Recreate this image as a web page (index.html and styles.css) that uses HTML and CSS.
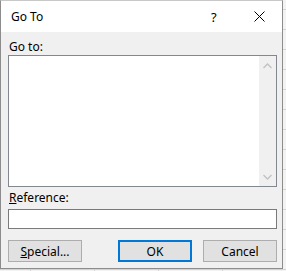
FILE: index.html
```html
<!DOCTYPE html>
<html>
	<head>
		<title>Go To</title>
		<meta charset="UTF-8">
		<link rel="stylesheet" href="styles.css">
	</head>
	<body>
		<div class="dialog">
			<div class="titlebar">
				<span class="title">Go To</span>
				<span class="help">?</span>
				<span class="close">
					<svg width="11" height="11" viewBox="0 0 11 11"><path d="M0.5 0.5 L10.5 10.5 M10.5 0.5 L0.5 10.5" stroke="#000" stroke-width="1" fill="none"/></svg>
				</span>
			</div>
			<div class="content">
				<div class="label">Go to:</div>
				<div class="listbox">
					<div class="list"></div>
					<div class="scrollbar">
						<svg width="9" height="6" viewBox="0 0 9 6"><path d="M0.5 5 L4.5 1 L8.5 5" stroke="#c2c2c2" stroke-width="1.3" fill="none"/></svg>
						<svg width="9" height="6" viewBox="0 0 9 6"><path d="M0.5 1 L4.5 5 L8.5 1" stroke="#c2c2c2" stroke-width="1.3" fill="none"/></svg>
					</div>
				</div>
				<div class="label ref"><u>R</u>eference:</div>
				<div class="textbox"></div>
				<div class="buttons">
					<button type="button" class="btn"><u>S</u>pecial...</button>
					<div class="spacer"></div>
					<button type="button" class="btn default">OK</button>
					<button type="button" class="btn">Cancel</button>
				</div>
			</div>
		</div>
	</body>
</html>
```

FILE: styles.css
```css
body, html {
	margin: 0;
	height: 100%;
}
body {
	background-color: #f3f3f3;
	background-image: linear-gradient(to right, #d4d4d4 1px, transparent 1px), linear-gradient(to bottom, #d4d4d4 1px, transparent 1px);
	background-size: 64px 100%, 100% 20px;
	background-position: 30px 0, 0 9px;
	font-family: "Noto Sans", "Open Sans", sans-serif;
	font-size: 12px;
	color: #000;
}
.dialog {
	width: 281px;
	height: 267px;
	border: 1px solid #8c8c8c;
	border-top-color: #c8c8c8;
	background: #f0f0f0;
	display: flex;
	flex-direction: column;
}
.titlebar {
	height: 31px;
	background: #fff;
	display: flex;
	align-items: center;
	padding-left: 10px;
}
.title {
	flex: 1;
}
.help {
	width: 14px;
	margin-right: 29px;
	font-size: 13px;
}
.close {
	width: 11px;
	height: 11px;
	margin-right: 17px;
	display: flex;
}
.content {
	padding: 7px 5px 0 7px;
	display: flex;
	flex-direction: column;
}
.label {
	height: 16px;
	line-height: 16px;
	padding-left: 1px;
}
.listbox {
	height: 130px;
	border: 1px solid #828790;
	background: #fff;
	display: flex;
}
.list {
	flex: 1;
}
.scrollbar {
	width: 17px;
	background: #f0f0f0;
	display: flex;
	flex-direction: column;
	justify-content: space-between;
	align-items: center;
	padding: 7px 0 6px;
}
.ref {
	margin-top: 3px;
}
.textbox {
	margin-top: 3px;
	height: 18px;
	border: 1px solid #7a7a7a;
	background: #fff;
}
.buttons {
	margin-top: 11px;
	display: flex;
	gap: 11px;
}
.spacer {
	flex: 1;
}
.btn {
	width: 74px;
	height: 22px;
	margin: 0;
	padding: 0;
	border: 1px solid #adadad;
	background: #e1e1e1;
	font-family: inherit;
	font-size: 12px;
	color: #000;
}
.default {
	border: 2px solid #0078d7;
}
```
